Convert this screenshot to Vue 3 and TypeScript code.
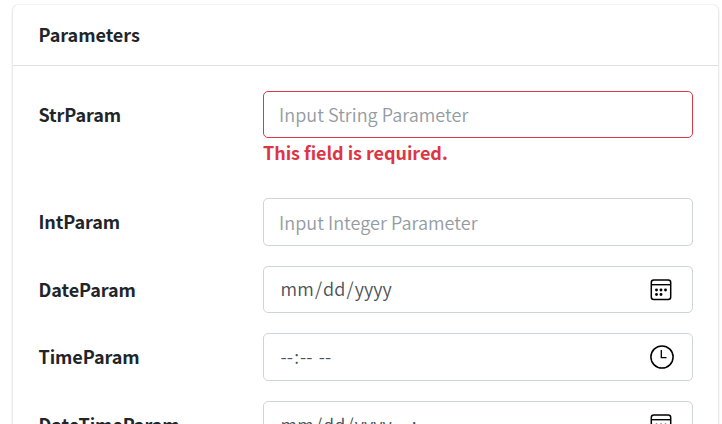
<script setup lang="ts">
interface Field {
  label: string
  hint: string[]
  kind: 'text' | 'date' | 'time' | 'datetime'
  error?: string
}

const fields: Field[] = [
  { label: 'StrParam', hint: ['Input String Parameter'], kind: 'text', error: 'This field is required.' },
  { label: 'IntParam', hint: ['Input Integer Parameter'], kind: 'text' },
  { label: 'DateParam', hint: ['mm', '/', 'dd', '/', 'yyyy'], kind: 'date' },
  { label: 'TimeParam', hint: ['--', ':', '--', ' ', '--'], kind: 'time' },
  { label: 'DateTimeParam', hint: ['mm', '/', 'dd', '/', 'yyyy', ' ', '--', ':', '--', ' ', '--'], kind: 'datetime' },
]

const isSegment = (part: string): boolean => part.length > 1
</script>

<template>
  <main class="page">
    <section class="card">
      <header class="card-header"><span class="title">Parameters</span></header>
      <div class="card-body">
        <div v-for="f in fields" :key="f.label" class="row" :class="[f.kind, { invalid: f.error }]">
          <div class="label"><span class="name">{{ f.label }}</span></div>
          <div class="field">
            <div class="control">
              <span class="hint"><span v-for="(part, i) in f.hint" :key="i" :class="{ segment: isSegment(part) }">{{ part }}</span></span>
              <svg v-if="f.kind === 'time'" class="icon" viewBox="0 0 24 24">
                <circle cx="12" cy="12" r="11.1" fill="none" stroke="#000" stroke-width="1.5" />
                <path d="M11.3 5v7.6h5.2" fill="none" stroke="#000" stroke-width="1.3" />
              </svg>
              <svg v-else-if="f.kind !== 'text'" class="icon" viewBox="0 0 24 24">
                <rect x="1.3" y="2.1" width="19.4" height="19.4" rx="2.5" fill="none" stroke="#000" stroke-width="1.5" />
                <path d="M1.3 6.7h19.4" stroke="#000" stroke-width="1.4" />
                <g fill="#000">
                  <circle cx="6.5" cy="12" r="1.45" /><circle cx="11" cy="12" r="1.45" /><circle cx="15.5" cy="12" r="1.45" />
                  <circle cx="6.5" cy="16.5" r="1.45" /><circle cx="11" cy="16.5" r="1.45" />
                </g>
              </svg>
            </div>
            <div v-if="f.error" class="error">{{ f.error }}</div>
          </div>
        </div>
      </div>
    </section>
  </main>
</template>

<style>
body {
  background: #fff;
  overflow: hidden;
}
</style>

<style scoped>
.page {
  box-sizing: border-box;
  height: 424px;
  overflow: hidden;
  padding: 5px 4px 0 13px;
  font-family: "Noto Sans CJK SC", "Open Sans", sans-serif;
  font-size: 18px;
  line-height: 30px;
  color: #212529;
}
.card {
  height: 500px;
  border-radius: 5px;
  background: #fff;
  box-shadow: 0 0 1px rgba(0, 0, 0, 0.16), 0 1px 3px rgba(0, 0, 0, 0.2);
}
.card-header {
  box-sizing: border-box;
  height: 61px;
  padding: 14px 25px 15px 25.5px;
  border-bottom: 1px solid #dfdfdf;
  font-weight: 700;
  letter-spacing: -0.05px;
}
.card-body {
  padding: 25px 25px 0;
}
.row {
  display: flex;
  height: 67.5px;
}
.row.invalid {
  height: 107.3px;
}
.label {
  box-sizing: border-box;
  width: 225px;
  padding: 8px 0 0 0.5px;
  font-weight: 700;
  letter-spacing: -0.08px;
  white-space: nowrap;
}
.field {
  flex: 1;
}
.control {
  box-sizing: border-box;
  display: flex;
  justify-content: space-between;
  align-items: center;
  height: 47.5px;
  padding: 0 18px 0 15px;
  border: 1px solid #ced4da;
  border-radius: 5px;
  color: #495057;
  font-weight: 350;
}
.text .control {
  color: #939ba2;
}
.date .control,
.time .control,
.datetime .control {
  padding-left: 15.4px;
}
.invalid .control {
  height: 47px;
  border-color: #dc3545;
}
.hint {
  padding-bottom: 2px;
  white-space: pre;
}
.text:not(.invalid) .hint {
  padding-bottom: 0;
}
.date .hint {
  padding-bottom: 3px;
}
.segment {
  letter-spacing: 0.05px;
}
.date .segment,
.time .segment,
.datetime .segment {
  padding: 0 1.1px;
  letter-spacing: 0.1px;
}
.icon {
  width: 24px;
  height: 24px;
}
.error {
  margin-top: -1px;
  color: #dc3545;
  font-weight: 700;
  letter-spacing: -0.05px;
}
</style>
